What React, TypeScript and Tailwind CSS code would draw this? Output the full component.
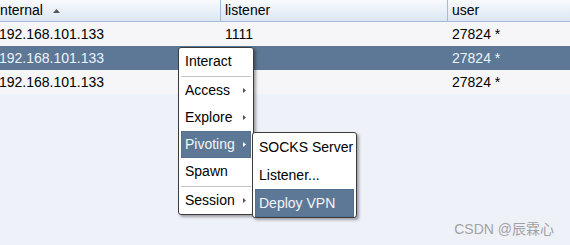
import React from 'react';

const rows = [
  { internal: '192.168.101.133', listener: '1111', user: '27824 *', selected: false },
  { internal: '192.168.101.133', listener: '1111', user: '27824 *', selected: true },
  { internal: '192.168.101.133', listener: '1111', user: '27824 *', selected: false },
];

const Arrow: React.FC<{ light?: boolean }> = ({ light }) => (
  <svg width="3" height="5" viewBox="0 0 3 5" className="shrink-0">
    <path d="M0 0 L3 2.5 L0 5 Z" fill={light ? '#ffffff' : '#555555'} />
  </svg>
);

interface ItemProps {
  label: string;
  sub?: boolean;
  active?: boolean;
  h?: string;
}

const MenuItem: React.FC<ItemProps> = ({ label, sub, active, h = 'h-[27px]' }) => (
  <div
    className={`${h} flex items-center justify-between whitespace-nowrap pl-[3px] pr-[4px] ${
      active ? 'bg-[#5d7896] text-[#f2f5f9] border border-[#52708f]' : 'text-black border border-transparent'
    }`}
  >
    <span>{label}</span>
    {sub && <Arrow light={active} />}
  </div>
);

const Sep: React.FC = () => (
  <div className="h-[2px] flex items-center">
    <div className="w-full h-px bg-[#c4c4c4]" />
  </div>
);

const App: React.FC = () => {
  return (
    <div
      className="relative w-[570px] h-[245px] overflow-hidden bg-[#eff1f8] text-[14px] text-black"
      style={{ fontFamily: '"Liberation Sans", Arial, sans-serif' }}
    >
      {/* Header */}
      <div className="flex h-[22px] bg-gradient-to-b from-[#f8fafd] to-[#dce6f2] border-b border-[#a3bbd5]">
        <div className="w-[221px] flex items-center whitespace-nowrap border-r border-[#a3bbd5]">
          <span className="ml-[-3px]">internal</span>
          <svg width="7" height="4" viewBox="0 0 7 4" className="ml-[10px]">
            <path d="M0 4 L3.5 0 L7 4 Z" fill="#555555" />
          </svg>
        </div>
        <div className="w-[227px] flex items-center pl-[4px] border-r border-[#a3bbd5]">listener</div>
        <div className="flex-1 flex items-center pl-[4px]">user</div>
      </div>

      {/* Rows */}
      {rows.map((r, idx) => (
        <div
          key={idx}
          className={`flex h-[24px] items-center whitespace-nowrap ${
            r.selected ? 'bg-[#5d7896] text-[#eef2f7]' : 'bg-[#f6f6f9] text-black'
          }`}
        >
          <div className="w-[221px]">
            <span className="ml-[-1px]">{r.internal}</span>
          </div>
          <div className="w-[227px] pl-[4px]">{r.listener}</div>
          <div className="flex-1 pl-[4px]">{r.user}</div>
        </div>
      ))}

      {/* Context menu */}
      <div className="absolute left-[178px] top-[47px] w-[76px] h-[168px] bg-white border border-[#3c3c3c] rounded-[3px] shadow-[2px_2px_3px_rgba(0,0,0,0.35)] px-[2px]">
        <MenuItem label="Interact" />
        <Sep />
        <MenuItem label="Access" sub />
        <MenuItem label="Explore" sub />
        <MenuItem label="Pivoting" sub active />
        <MenuItem label="Spawn" />
        <Sep />
        <MenuItem label="Session" sub />
      </div>

      {/* Submenu */}
      <div className="absolute left-[252px] top-[132px] w-[105px] h-[86px] bg-white border border-[#3c3c3c] rounded-[3px] shadow-[2px_2px_3px_rgba(0,0,0,0.35)] px-[2px]">
        <MenuItem label="SOCKS Server" h="h-[28px]" />
        <MenuItem label="Listener..." h="h-[28px]" />
        <MenuItem label="Deploy VPN" h="h-[28px]" active />
      </div>

      {/* Watermark */}
      <div
        className="absolute right-[16px] bottom-[5px] text-[14px] text-[#a2a2a2] whitespace-nowrap"
        style={{ fontFamily: '"Liberation Sans", "Noto Sans CJK SC", sans-serif' }}
      >
        CSDN @辰霖心
      </div>
    </div>
  );
};

export default App;
